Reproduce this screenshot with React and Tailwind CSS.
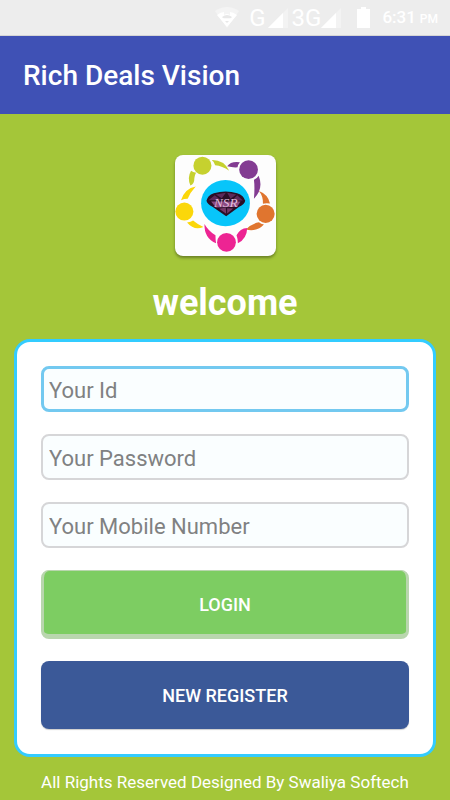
import React, { useState } from 'react';

const FIELDS = [
  { name: 'userId', label: 'Your Id', type: 'text' },
  { name: 'password', label: 'Your Password', type: 'password' },
  { name: 'mobile', label: 'Your Mobile Number', type: 'tel' },
];

const WifiIcon = () => (
  <svg viewBox="0 0 24 21" className="w-6 h-[21px]" aria-hidden="true">
    <path d="M0 4Q12-4 24 4L12 21Z" fill="#f4f4f4" />
    <path d="M2 8Q6 5 9 5V8Q12 6 15 8V5Q18 5 22 8L12 20Z" fill="#fff" />
    <path d="M7 10Q12 6 17 10L15 12H9ZM10 14H14L12 16Z" fill="#e8e8e8" />
    <path d="M8 12H16" stroke="#fff" strokeWidth="1.5" />
  </svg>
);

const SignalIcon = () => (
  <svg viewBox="0 0 20 20" className="w-5 h-5" aria-hidden="true">
    <path d="M20 0V20H0Z" fill="#f3f3f3" />
    <path d="M15 5V20H0Z" fill="#fff" />
  </svg>
);

const BatteryIcon = () => (
  <svg viewBox="0 0 13 21" className="w-[13px] h-[21px]" aria-hidden="true">
    <path d="M4 0H9V2H13V21H0V2H4Z" fill="#fff" />
  </svg>
);

const StatusBar = () => (
  <div className="flex h-9 items-center justify-end bg-[#ededed] border-b border-[#d5d5d5] pr-3 text-white">
    <WifiIcon />
    <span className="ml-2.5 text-2xl">G</span>
    <span className="ml-0.5"><SignalIcon /></span>
    <span className="ml-1 text-2xl">3G</span>
    <span><SignalIcon /></span>
    <span className="ml-4"><BatteryIcon /></span>
    <span className="ml-3 flex items-baseline gap-1 font-medium">
      <span className="text-[17px]">6:31</span>
      <span className="text-xs">PM</span>
    </span>
  </div>
);

const Logo = () => (
  <svg viewBox="28 30 302 300" className="w-full h-full" role="img" aria-label="Rich Deals Vision">
    {/* green */}
    <g fill="#c6d12f">
      <circle cx="110" cy="61" r="27" />
      <path d="M138 44Q174 43 190 76Q169 62 148 60Q145 49 138 44Z" />
      <path d="M76 76Q64 96 74 120Q86 117 86 98Q87 88 91 82Q82 81 76 76Z" />
    </g>
    {/* purple */}
    <g fill="#833c92">
      <circle cx="248" cy="73" r="28" />
      <path d="M184 63Q195 47 222 51Q216 58 215 66Q199 67 184 63Z" />
      <path d="M278 91Q294 128 264 160Q267 126 264 103Q273 100 278 91Z" />
    </g>
    {/* orange */}
    <g fill="#e0752f">
      <circle cx="299" cy="205" r="27" />
      <path d="M279 137Q306 147 312 174Q299 172 291 175Q292 153 279 137Z" />
      <path d="M294 237Q272 260 240 252Q257 234 279 230Q285 235 294 237Z" />
    </g>
    {/* pink */}
    <g fill="#ed2493">
      <circle cx="182" cy="290" r="28" />
      <path d="M116 235Q128 256 149 269Q149 283 151 293Q115 278 116 235Z" />
      <path d="M244 247Q243 279 216 293Q216 280 212 269Q222 248 244 247Z" />
    </g>
    {/* yellow */}
    <g fill="#fbd70a">
      <circle cx="56" cy="198" r="27" />
      <path d="M46 164Q57 129 90 123Q73 141 66 160Q55 160 46 164Z" />
      <path d="M64 231Q76 229 82 225Q96 237 113 244Q86 257 64 231Z" />
    </g>
    <ellipse cx="179" cy="173" rx="73" ry="69" fill="#08c5fa" />
    <path d="M122 166Q125 150 144 143Q180 133 214 143Q234 150 238 166Q236 176 220 184L181 212L140 184Q125 177 122 166Z" fill="#2a0f26" />
    <path d="M128 164L147 149L165 164ZM150 147L180 142L168 158ZM184 142L211 147L194 160ZM214 149L231 165L198 166Z" fill="#5c2a5a" />
    <path d="M136 168L224 168L214 184L150 186Z" fill="#8b4a82" />
    <path d="M160 190L180 186L181 205ZM184 188L202 189L184 204Z" fill="#743766" />
    <text x="180" y="184" textAnchor="middle" fontSize="40" fontFamily="Liberation Serif, serif" fontStyle="italic" fill="#e0bddb">NSR</text>
  </svg>
);

export default function App() {
  const [form, setForm] = useState({ userId: '', password: '', mobile: '' });
  const [active, setActive] = useState('userId');

  const handleChange = (e) => {
    const { name, value } = e.target;
    setForm(prev => ({ ...prev, [name]: value }));
  };

  return (
    <div className="flex min-h-screen flex-col bg-[#a4c639] font-[Roboto,sans-serif]">
      <StatusBar />
      <header className="flex h-[78px] items-center bg-[#3f51b5] px-[23px] pt-0.5">
        <h1 className="text-[28px] font-medium text-white">Rich Deals Vision</h1>
      </header>

      <main className="flex grow flex-col items-center px-[14px] pt-[41px]">
        <div className="size-[101px] overflow-hidden rounded-lg bg-[#fdfdfd] shadow-[0_2px_3px_rgba(0,0,0,0.35)]">
          <Logo />
        </div>
        <h2 className="mt-[27px] text-4xl font-bold text-white">welcome</h2>

        <form
          onSubmit={(e) => e.preventDefault()}
          className="mt-4 flex w-full flex-col gap-[22px] rounded-2xl border-3 border-[#33ccff] bg-white px-6 pt-6 pb-[25px]"
        >
          {FIELDS.map(field => (
            <input
              key={field.name}
              name={field.name}
              type={field.type}
              aria-label={field.label}
              placeholder={field.label}
              value={form[field.name]}
              onChange={handleChange}
              onFocus={() => setActive(field.name)}
              className={`h-[46px] w-full rounded-lg bg-[#fafeff] pt-0.5 text-[22px] text-gray-800 outline-none placeholder:text-[#808182] ${
                active === field.name ? 'border-3 border-[#73c9f0] px-[5px]' : 'border-2 border-[#d6d6d8] px-1.5'
              }`}
            />
          ))}
          <button
            type="submit"
            className="h-[69px] rounded-lg border-x-3 border-t border-b-5 border-[#b9d6ae] bg-[#7dcd62] pt-1 text-lg font-medium text-white"
          >
            LOGIN
          </button>
          <button
            type="button"
            className="h-[68px] rounded-lg bg-[#3b5998] pt-0.5 text-lg font-medium text-white shadow-[0_1px_1px_rgba(0,0,0,0.2)]"
          >
            NEW REGISTER
          </button>
        </form>
      </main>

      <footer className="pb-[5px] text-center text-[17px] text-white">
        All Rights Reserved Designed By Swaliya Softech
      </footer>
    </div>
  );
}
